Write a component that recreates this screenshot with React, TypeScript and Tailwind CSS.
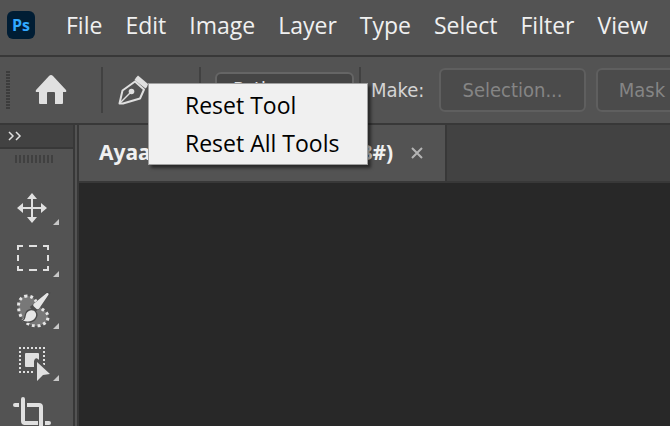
import { type ReactNode } from 'react';

const menus = ['File', 'Edit', 'Image', 'Layer', 'Type', 'Select', 'Filter', 'View'];

const tools: { name: string; icon: ReactNode }[] = [
  {
    name: 'Move',
    icon: (
      <g>
        <path d="M32 15v22M21 26h22" stroke="#e0e0e0" strokeWidth="2" />
        <path
          d="M32 11l5 6H27zM32 41l5-6H27zM17 26l6-5v10zM47 26l-6-5v10z"
          fill="#e0e0e0"
        />
      </g>
    ),
  },
  {
    name: 'Rectangular Marquee',
    icon: (
      <path
        d="M18 16v-4h5M29 12h8M43 12h5v4M48 21v6M48 32v4h-5M37 36h-8M23 36h-5v-4M18 27v-6"
        fill="none"
        stroke="#e0e0e0"
        strokeWidth="2"
      />
    ),
  },
  {
    name: 'Quick Selection',
    icon: (
      <g>
        <path
          d="M27 10c-5 0-8.500 4-8.500 10 0 7 3 13 7.500 16.500 4 3 9 4 14 3 5-1.500 8-4.500 8-8.500 0-5-4-6-6.500-8.500C39 20 37 17 35.500 14.500 33.500 11.500 30.500 10 27 10z"
          fill="#787878"
          stroke="#e6e6e6"
          strokeWidth="3"
          strokeDasharray="2.800 2.900"
        />
        <path
          d="M48 8L38 22l-3 2-3-3L47 8zM29 25c4-2 8.500 2 6.500 6-2 4.500-7 5-11.500 3.500 3-2 1-8 5-9.500z"
          fill="#4b4b4b"
          stroke="#4b4b4b"
          strokeWidth="3"
        />
        <path
          d="M46.500 7.300c1.300-1 2.500 0 2 1.500L39.500 22c-1 1.500-2 1.700-3.200.7l-2.400-2.200c-1-1-.9-2 .1-3z"
          fill="#e6e6e6"
        />
        <path
          d="M28.500 25.200c4.500-3 9.500 1.300 7 6-2.300 4.300-7.500 5.300-12.500 3.600 4-2 1.500-7.500 5.500-9.600z"
          fill="#e6e6e6"
        />
      </g>
    ),
  },
  {
    name: 'Object Selection',
    icon: (
      <g>
        <rect
          x="20"
          y="10"
          width="24"
          height="24"
          fill="none"
          stroke="#e0e0e0"
          strokeWidth="2"
          strokeDasharray="2 2"
          strokeDashoffset="1"
        />
        <rect x="25" y="15" width="14" height="14" rx="1" fill="#e0e0e0" />
        <path d="M34 36V23q1-4 4-2l9 9v6z" fill="#535353" />
        <path d="M37 24l13 12-7 1-6 6z" fill="#e0e0e0" />
      </g>
    ),
  },
  {
    name: 'Crop',
    icon: (
      <g fill="none" stroke="#e0e0e0" strokeWidth="4">
        <path d="M15 15h2M23 9v22q0 2 2 2M47 33h2" strokeLinecap="round" />
        <path d="M16 15h3M27 15h12q2 0 2 2v20M24 33h14M45 33h3" />
      </g>
    ),
  },
];

function HomeIcon() {
  return (
    <svg width="34" height="32" viewBox="0 0 34 32" aria-hidden="true">
      <path
        d="M17 1q1 0 2 1l13 14q1 2-1 2h-2v11q0 1-1 1h-7V19q0-1-1-1h-6q-1 0-1 1v11H6q-1 0-1-1V18H3q-2 0-1-2L15 2q1-1 2-1z"
        fill="#e0e0e0"
      />
    </svg>
  );
}

function PenIcon() {
  return (
    <svg width="32" height="32" viewBox="0 0 32 32" aria-hidden="true">
      <path
        d="M2.500 29.500L5.500 16.500 18 7.500l9 8-4 9L6 29.500z"
        fill="none"
        stroke="#e0e0e0"
        strokeWidth="2"
        strokeLinejoin="round"
      />
      <path d="M3 29L14.500 17.500" stroke="#e0e0e0" strokeWidth="1.500" />
      <circle cx="14.500" cy="17.500" r="2.800" fill="#e0e0e0" />
      <path d="M21 1.500l10 8.500q-.5 3-2.500 4.500L17.500 6q1.500-3 3.500-4.500z" fill="#e0e0e0" />
    </svg>
  );
}

function Separator() {
  return <div className="h-[46px] w-0.5 shrink-0 bg-[#414141]" />;
}

function MenuBar() {
  return (
    <header className="flex h-[57px] shrink-0 items-center border-b-2 border-[#383838] pb-1.5 pl-[7px]">
      <div className="flex size-7 shrink-0 items-center justify-center rounded-md bg-[#001d34] font-['Open_Sans',sans-serif] text-base font-bold text-[#31a8ff]">
        Ps
      </div>
      <nav className="ml-[19px] flex">
        {menus.map((menu) => (
          <button
            key={menu}
            type="button"
            className="pr-[11px] pl-3 text-[23px] leading-8 text-[#f0f0f0]"
          >
            {menu}
          </button>
        ))}
      </nav>
    </header>
  );
}

function OptionsBar() {
  return (
    <div className="flex h-[68px] shrink-0 items-center overflow-hidden border-b-2 border-[#383838] font-['DejaVu_Sans_Condensed','DejaVu_Sans',sans-serif] text-[20px]">
      <svg className="ml-1.5 shrink-0" width="4" height="40" aria-hidden="true">
        <path d="M2 1v38" stroke="#3c3c3c" strokeWidth="4" strokeDasharray="2 1" />
      </svg>
      <button type="button" aria-label="Home" className="ml-6 shrink-0">
        <HomeIcon />
      </button>
      <div className="ml-[33px] flex shrink-0 items-center">
        <Separator />
        <button type="button" aria-label="Pen tool" className="mr-[50px] ml-3.5">
          <PenIcon />
        </button>
        <Separator />
      </div>
      <select
        aria-label="Pen mode"
        className="mr-[5px] ml-3.5 h-9 w-[139px] shrink-0 appearance-none rounded-md border-2 border-[#656565] bg-[#454545] pb-1 pl-4 text-[#e0e0e0]"
      >
        <option>Path</option>
        <option>Shape</option>
      </select>
      <Separator />
      <span className="ml-2.5 w-[68px] shrink-0 text-[#d4d4d4]">Make:</span>
      <button
        type="button"
        className="h-11 w-[147px] shrink-0 rounded-md border-2 border-[#5f5f5f] bg-[#4b4b4b] text-[#858585]"
      >
        Selection...
      </button>
      <button
        type="button"
        className="ml-2.5 h-11 w-[92px] shrink-0 rounded-md border-2 border-[#5f5f5f] bg-[#4b4b4b] text-[#858585]"
      >
        Mask
      </button>
    </div>
  );
}

function ToolPanel() {
  return (
    <aside className="flex w-[75px] shrink-0 flex-col border-r-2 border-[#383838]">
      <button
        type="button"
        aria-label="Expand panel"
        className="flex h-6 shrink-0 items-center border-b-2 border-[#383838] bg-[#424242] pl-2"
      >
        <svg width="14" height="10" viewBox="0 0 14 10" aria-hidden="true">
          <path d="M1 1l4 4-4 4M8 1l4 4-4 4" fill="none" stroke="#e0e0e0" strokeWidth="1.500" />
        </svg>
      </button>
      <svg className="mt-1.5 mb-[19px] ml-[15px] shrink-0" width="39" height="8" aria-hidden="true">
        <path d="M0 4h39" stroke="#404040" strokeWidth="8" strokeDasharray="2 2" />
      </svg>
      {tools.map((tool) => (
        <button key={tool.name} type="button" aria-label={tool.name} className="shrink-0">
          <svg width="64" height="52" viewBox="0 0 64 52" aria-hidden="true">
            {tool.icon}
            <path d="M59 37v6h-6z" fill="#c8c8c8" />
          </svg>
        </button>
      ))}
    </aside>
  );
}

function DocumentArea() {
  return (
    <main className="ml-0.5 flex min-w-0 grow flex-col border-l-2 border-[#383838]">
      <div className="flex h-[58px] shrink-0 border-b-2 border-[#383838] bg-[#424242]">
        <div className="flex w-[368px] shrink-0 items-center border-r-2 border-[#383838] bg-[#535353] pl-5">
          <div className="flex w-[312px] gap-2 whitespace-nowrap font-['Noto_Sans',sans-serif] text-[21px] font-bold text-[#f0f0f0]">
            <span>Ayaan.jpg</span>
            <span>@ 66.7% (RGB/8#)</span>
          </div>
          <button type="button" aria-label="Close document">
            <svg width="12" height="12" viewBox="0 0 12 12" aria-hidden="true">
              <path d="M1 1l10 10M11 1L1 11" stroke="#b4b4b4" strokeWidth="2" />
            </svg>
          </button>
        </div>
      </div>
      <div className="grow bg-[#282828]" />
    </main>
  );
}

function ContextMenu() {
  return (
    <div
      role="menu"
      className="absolute top-[83px] left-[148px] flex w-[220px] flex-col border border-[#a0a0a0] bg-[#f0f0f0] py-0.5 text-[23px] leading-[38px] text-black shadow-[3px_3px_3px_rgba(0,0,0,0.5)]"
    >
      <button type="button" role="menuitem" className="pl-9 text-left">
        Reset Tool
      </button>
      <button type="button" role="menuitem" className="pl-9 text-left">
        Reset All Tools
      </button>
    </div>
  );
}

export default function App() {
  return (
    <div className="relative flex h-screen flex-col overflow-hidden bg-[#535353] font-['Open_Sans','Noto_Sans',sans-serif]">
      <MenuBar />
      <OptionsBar />
      <div className="flex min-h-0 grow overflow-hidden">
        <ToolPanel />
        <DocumentArea />
      </div>
      <ContextMenu />
    </div>
  );
}
